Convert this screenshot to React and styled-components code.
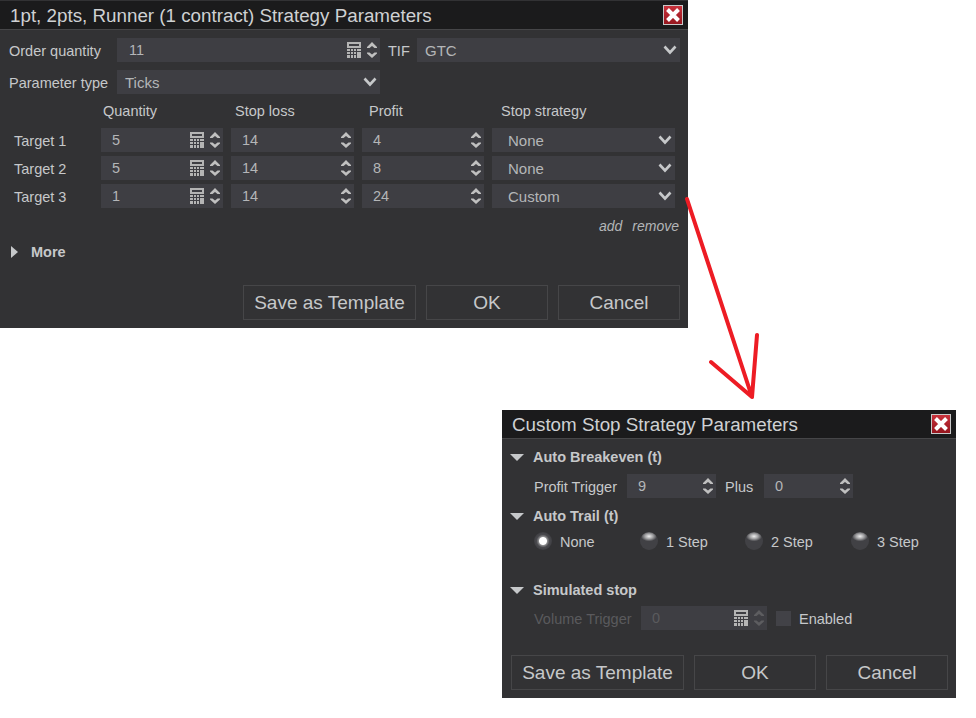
import React from 'react';
import styled, { createGlobalStyle } from 'styled-components';

const Global = createGlobalStyle`
  html, body { margin: 0; padding: 0; background: #fff; }
  body { width: 976px; height: 718px; overflow: hidden; font-family: "Liberation Sans", Arial, sans-serif; color: #c6c8ca; }
`;

const Desktop = styled.div`
  position: relative;
  width: 976px;
  height: 718px;
`;

const Win = styled.div`
  position: absolute;
  left: ${p => p.$x}px;
  top: ${p => p.$y}px;
  width: ${p => p.$w}px;
  height: ${p => p.$h}px;
  box-sizing: border-box;
  background: #323234;
  display: flex;
  flex-direction: column;
`;

const TitleBar = styled.div`
  height: 29px;
  flex: none;
  box-sizing: border-box;
  margin-top: ${p => p.$top || 0}px;
  background: #1b1b1c;
  border-bottom: 1px solid #464648;
  display: flex;
  align-items: center;
  justify-content: space-between;
  padding: 0 5px 0 ${p => p.$pad}px;
  font-size: 18.8px;
  color: #cfd1d3;
`;

const TitleText = styled.span`
  padding-top: 2px;
`;

const CloseBtn = styled.div`
  width: 20px;
  height: 20px;
  box-sizing: border-box;
  border: 1px solid #c9c9c9;
  background: linear-gradient(#c8323c, #96161e);
  display: flex;
  align-items: center;
  justify-content: center;
`;

const Body1 = styled.div`
  flex: 1;
  display: flex;
  flex-direction: column;
  padding: 8px 8px 8px 9px;
`;

const Row = styled.div`
  display: flex;
  align-items: center;
  height: 24px;
  margin-bottom: ${p => p.$mb || 0}px;
`;

const Label = styled.span`
  font-size: 14.5px;
  color: ${p => (p.$off ? '#5a5a5d' : '#c6c8ca')};
  width: ${p => (p.$w ? p.$w + 'px' : 'auto')};
  margin-left: ${p => p.$ml || 0}px;
  padding-top: 2px;
  flex: none;
  white-space: nowrap;
`;

const Field = styled.div`
  width: ${p => p.$w}px;
  height: 24px;
  flex: none;
  box-sizing: border-box;
  background: #3e3e43;
  display: flex;
  align-items: center;
  font-size: 14.5px;
  color: ${p => (p.$off ? '#5a5a5d' : '#b4b6b8')};
  padding-left: ${p => p.$pad}px;
  padding-right: 3px;
`;

const FieldText = styled.span`
  flex: 1;
`;

const SelectText = styled.span`
  flex: 1;
  font-size: 15px;
`;

const Grid = styled.div`
  display: grid;
  grid-template-columns: 92px 122px 123px 122px 183px;
  column-gap: 8px;
  row-gap: 4px;
  margin-top: 8px;
  margin-left: -8px;
`;

const ColHead = styled.div`
  font-size: 14.5px;
  height: 22px;
  line-height: 18px;
  padding-left: ${p => p.$pad || 2}px;
`;

const RowLabel = styled.div`
  font-size: 14.5px;
  line-height: 26px;
  padding-left: 13px;
  height: 24px;
`;

const Links = styled.div`
  display: flex;
  justify-content: flex-end;
  gap: 10px;
  font-size: 14px;
  font-style: italic;
  margin-top: 9px;
  margin-right: 1px;
  height: 18px;
  line-height: 18px;
  color: #b4b6b8;
`;

const MoreRow = styled.div`
  display: flex;
  align-items: center;
  gap: 13px;
  margin-top: 7px;
  margin-left: 2px;
  height: 20px;
  font-size: 14.5px;
  font-weight: bold;
`;

const Footer = styled.div`
  margin-top: auto;
  display: flex;
  justify-content: flex-end;
  gap: 10px;
`;

const Button = styled.div`
  width: ${p => p.$w}px;
  height: 35px;
  box-sizing: border-box;
  border: 1px solid #464648;
  display: flex;
  align-items: center;
  justify-content: center;
  font-size: 19px;
  color: #c6c8ca;
`;

const Body2 = styled.div`
  flex: 1;
  display: flex;
  flex-direction: column;
  padding: 9px 8px 8px 8px;
`;

const Section = styled.div`
  display: flex;
  align-items: center;
  gap: 9px;
  height: 18px;
  font-size: 14.5px;
  font-weight: bold;
  margin-top: ${p => p.$mt || 0}px;
`;

const SubRow = styled.div`
  display: flex;
  align-items: center;
  height: 24px;
  margin-top: ${p => p.$mt || 0}px;
  padding-left: ${p => p.$pad}px;
`;

const RadioItem = styled.div`
  display: flex;
  align-items: center;
  width: ${p => p.$w}px;
  flex: none;
  gap: 8px;
  font-size: 14.5px;
`;

const RadioText = styled.span`
  padding-top: 2px;
`;

const RadioDot = styled.span`
  width: 18px;
  height: 18px;
  border-radius: 50%;
  flex: none;
  background: ${p =>
    p.$on
      ? 'radial-gradient(circle at 50% 50%, #fff 0 3.5px, #8a8a8c 4.5px, #4a4a4e 6.5px, #3e3e42 9px)'
      : 'radial-gradient(ellipse 8px 5px at 50% 24%, #eeeeee 0, #a2a2a4 50%, rgba(100,100,102,0) 100%), #414145'};
`;

const Check = styled.span`
  width: 15px;
  height: 15px;
  flex: none;
  background: #424247;
  margin: 0 8px 0 9px;
`;

const Arrow = styled.svg`
  position: absolute;
  left: 680px;
  top: 190px;
  pointer-events: none;
`;

const Calc = () => (
  <svg width="14" height="16" viewBox="0 0 14 16" style={{ flex: 'none', marginRight: 6 }}>
    <path fill="#b4b4b4" d="M0 0h14v6H0zM0 7h3v2H0zM4 7h2v2H4zM7 7h2v2H7zM10 7h4v2h-4zM0 10h3v2H0zM4 10h2v2H4zM7 10h2v2H7zM10 10h4v6h-4zM0 13h3v3H0zM4 13h2v3H4zM7 13h2v3H7z" />
    <path fill="#3e3e43" d="M2 2h10v2H2z" />
  </svg>
);

const Spin = ({ off }) => (
  <svg width="10" height="16" viewBox="0 0 10 16" style={{ flex: 'none' }}>
    <path fill={off ? '#5d5d60' : '#c0c0c0'} d="M5 0 10 5V6H7.5L5 4 2.5 6H0V5zM0 10.5H2.5L5 12.5 7.5 10.5H10V11.5L5 16 0 11.5z" />
  </svg>
);

const Chevron = () => (
  <svg width="14" height="10" viewBox="0 0 14 10" style={{ flex: 'none' }}>
    <path fill="none" stroke="#c6c8ca" strokeWidth="2.6" d="M1.5 1.5 7 7.5 12.5 1.5" />
  </svg>
);

const Tri = ({ right }) =>
  right ? (
    <svg width="7" height="12" viewBox="0 0 7 12" style={{ flex: 'none' }}>
      <path fill="#c6c8ca" d="M0 0 7 6 0 12z" />
    </svg>
  ) : (
    <svg width="14" height="7" viewBox="0 0 14 7" style={{ flex: 'none' }}>
      <path fill="#c6c8ca" d="M0 0H14L7 7z" />
    </svg>
  );

const X = () => (
  <svg width="14" height="14" viewBox="0 0 14 14">
    <path stroke="#fff" strokeWidth="4" d="M1.5 1.5 12.5 12.5M12.5 1.5 1.5 12.5" />
  </svg>
);

const NumField = ({ w, pad, value, calc, off }) => (
  <Field $w={w} $pad={pad} $off={off}>
    <FieldText>{value}</FieldText>
    {calc && <Calc />}
    <Spin off={off} />
  </Field>
);

const SelectField = ({ w, pad, value }) => (
  <Field $w={w} $pad={pad}>
    <SelectText>{value}</SelectText>
    <Chevron />
  </Field>
);

const targets = [
  { name: 'Target 1', qty: 5, profit: 4, stop: 'None' },
  { name: 'Target 2', qty: 5, profit: 8, stop: 'None' },
  { name: 'Target 3', qty: 1, profit: 24, stop: 'Custom' },
];

const radios = [
  { label: 'None', w: 106, on: true },
  { label: '1 Step', w: 105 },
  { label: '2 Step', w: 106 },
  { label: '3 Step', w: 90 },
];

const Buttons = () => (
  <Footer>
    <Button $w={173}>Save as Template</Button>
    <Button $w={122}>OK</Button>
    <Button $w={122}>Cancel</Button>
  </Footer>
);

export default function App() {
  return (
    <Desktop>
      <Global />
      <Win $x={0} $y={0} $w={688} $h={328}>
        <TitleBar $top={1} $pad={10}>
          <TitleText>1pt, 2pts, Runner (1 contract) Strategy Parameters</TitleText>
          <CloseBtn><X /></CloseBtn>
        </TitleBar>
        <Body1>
          <Row $mb={8}>
            <Label $w={108}>Order quantity</Label>
            <NumField w={263} pad={12} value="11" calc />
            <Label $w={29} $ml={8}>TIF</Label>
            <SelectField w={263} pad={8} value="GTC" />
          </Row>
          <Row>
            <Label $w={108}>Parameter type</Label>
            <SelectField w={263} pad={8} value="Ticks" />
          </Row>
          <Grid>
            <ColHead />
            <ColHead>Quantity</ColHead>
            <ColHead $pad={4}>Stop loss</ColHead>
            <ColHead $pad={7}>Profit</ColHead>
            <ColHead $pad={9}>Stop strategy</ColHead>
            {targets.map(t => (
              <React.Fragment key={t.name}>
                <RowLabel>{t.name}</RowLabel>
                <NumField w={122} pad={11} value={t.qty} calc />
                <NumField w={123} pad={11} value={14} />
                <NumField w={122} pad={11} value={t.profit} />
                <SelectField w={183} pad={16} value={t.stop} />
              </React.Fragment>
            ))}
          </Grid>
          <Links>
            <span>add</span>
            <span>remove</span>
          </Links>
          <MoreRow>
            <Tri right />
            <span>More</span>
          </MoreRow>
          <Buttons />
        </Body1>
      </Win>

      <Win $x={502} $y={410} $w={454} $h={288}>
        <TitleBar $pad={10}>
          <TitleText>Custom Stop Strategy Parameters</TitleText>
          <CloseBtn><X /></CloseBtn>
        </TitleBar>
        <Body2>
          <Section>
            <Tri />
            <span>Auto Breakeven (t)</span>
          </Section>
          <SubRow $mt={8} $pad={24}>
            <Label $w={93}>Profit Trigger</Label>
            <NumField w={89} pad={11} value={9} />
            <Label $w={39} $ml={9}>Plus</Label>
            <NumField w={89} pad={11} value={0} />
          </SubRow>
          <Section $mt={9}>
            <Tri />
            <span>Auto Trail (t)</span>
          </Section>
          <SubRow $mt={4} $pad={24}>
            {radios.map(r => (
              <RadioItem key={r.label} $w={r.w}>
                <RadioDot $on={r.on} />
                <RadioText>{r.label}</RadioText>
              </RadioItem>
            ))}
          </SubRow>
          <Section $mt={28}>
            <Tri />
            <span>Simulated stop</span>
          </Section>
          <SubRow $mt={7} $pad={24}>
            <Label $w={107} $off>Volume Trigger</Label>
            <NumField w={126} pad={11} value={0} calc off />
            <Check />
            <Label>Enabled</Label>
          </SubRow>
          <Buttons />
        </Body2>
      </Win>

      <Arrow width="90" height="220" viewBox="680 190 90 220">
        <path fill="none" stroke="#ed1c24" strokeWidth="4" strokeLinecap="round" strokeLinejoin="round"
          d="M687 199 752 397M757 335 752 397 711 362" />
      </Arrow>
    </Desktop>
  );
}
